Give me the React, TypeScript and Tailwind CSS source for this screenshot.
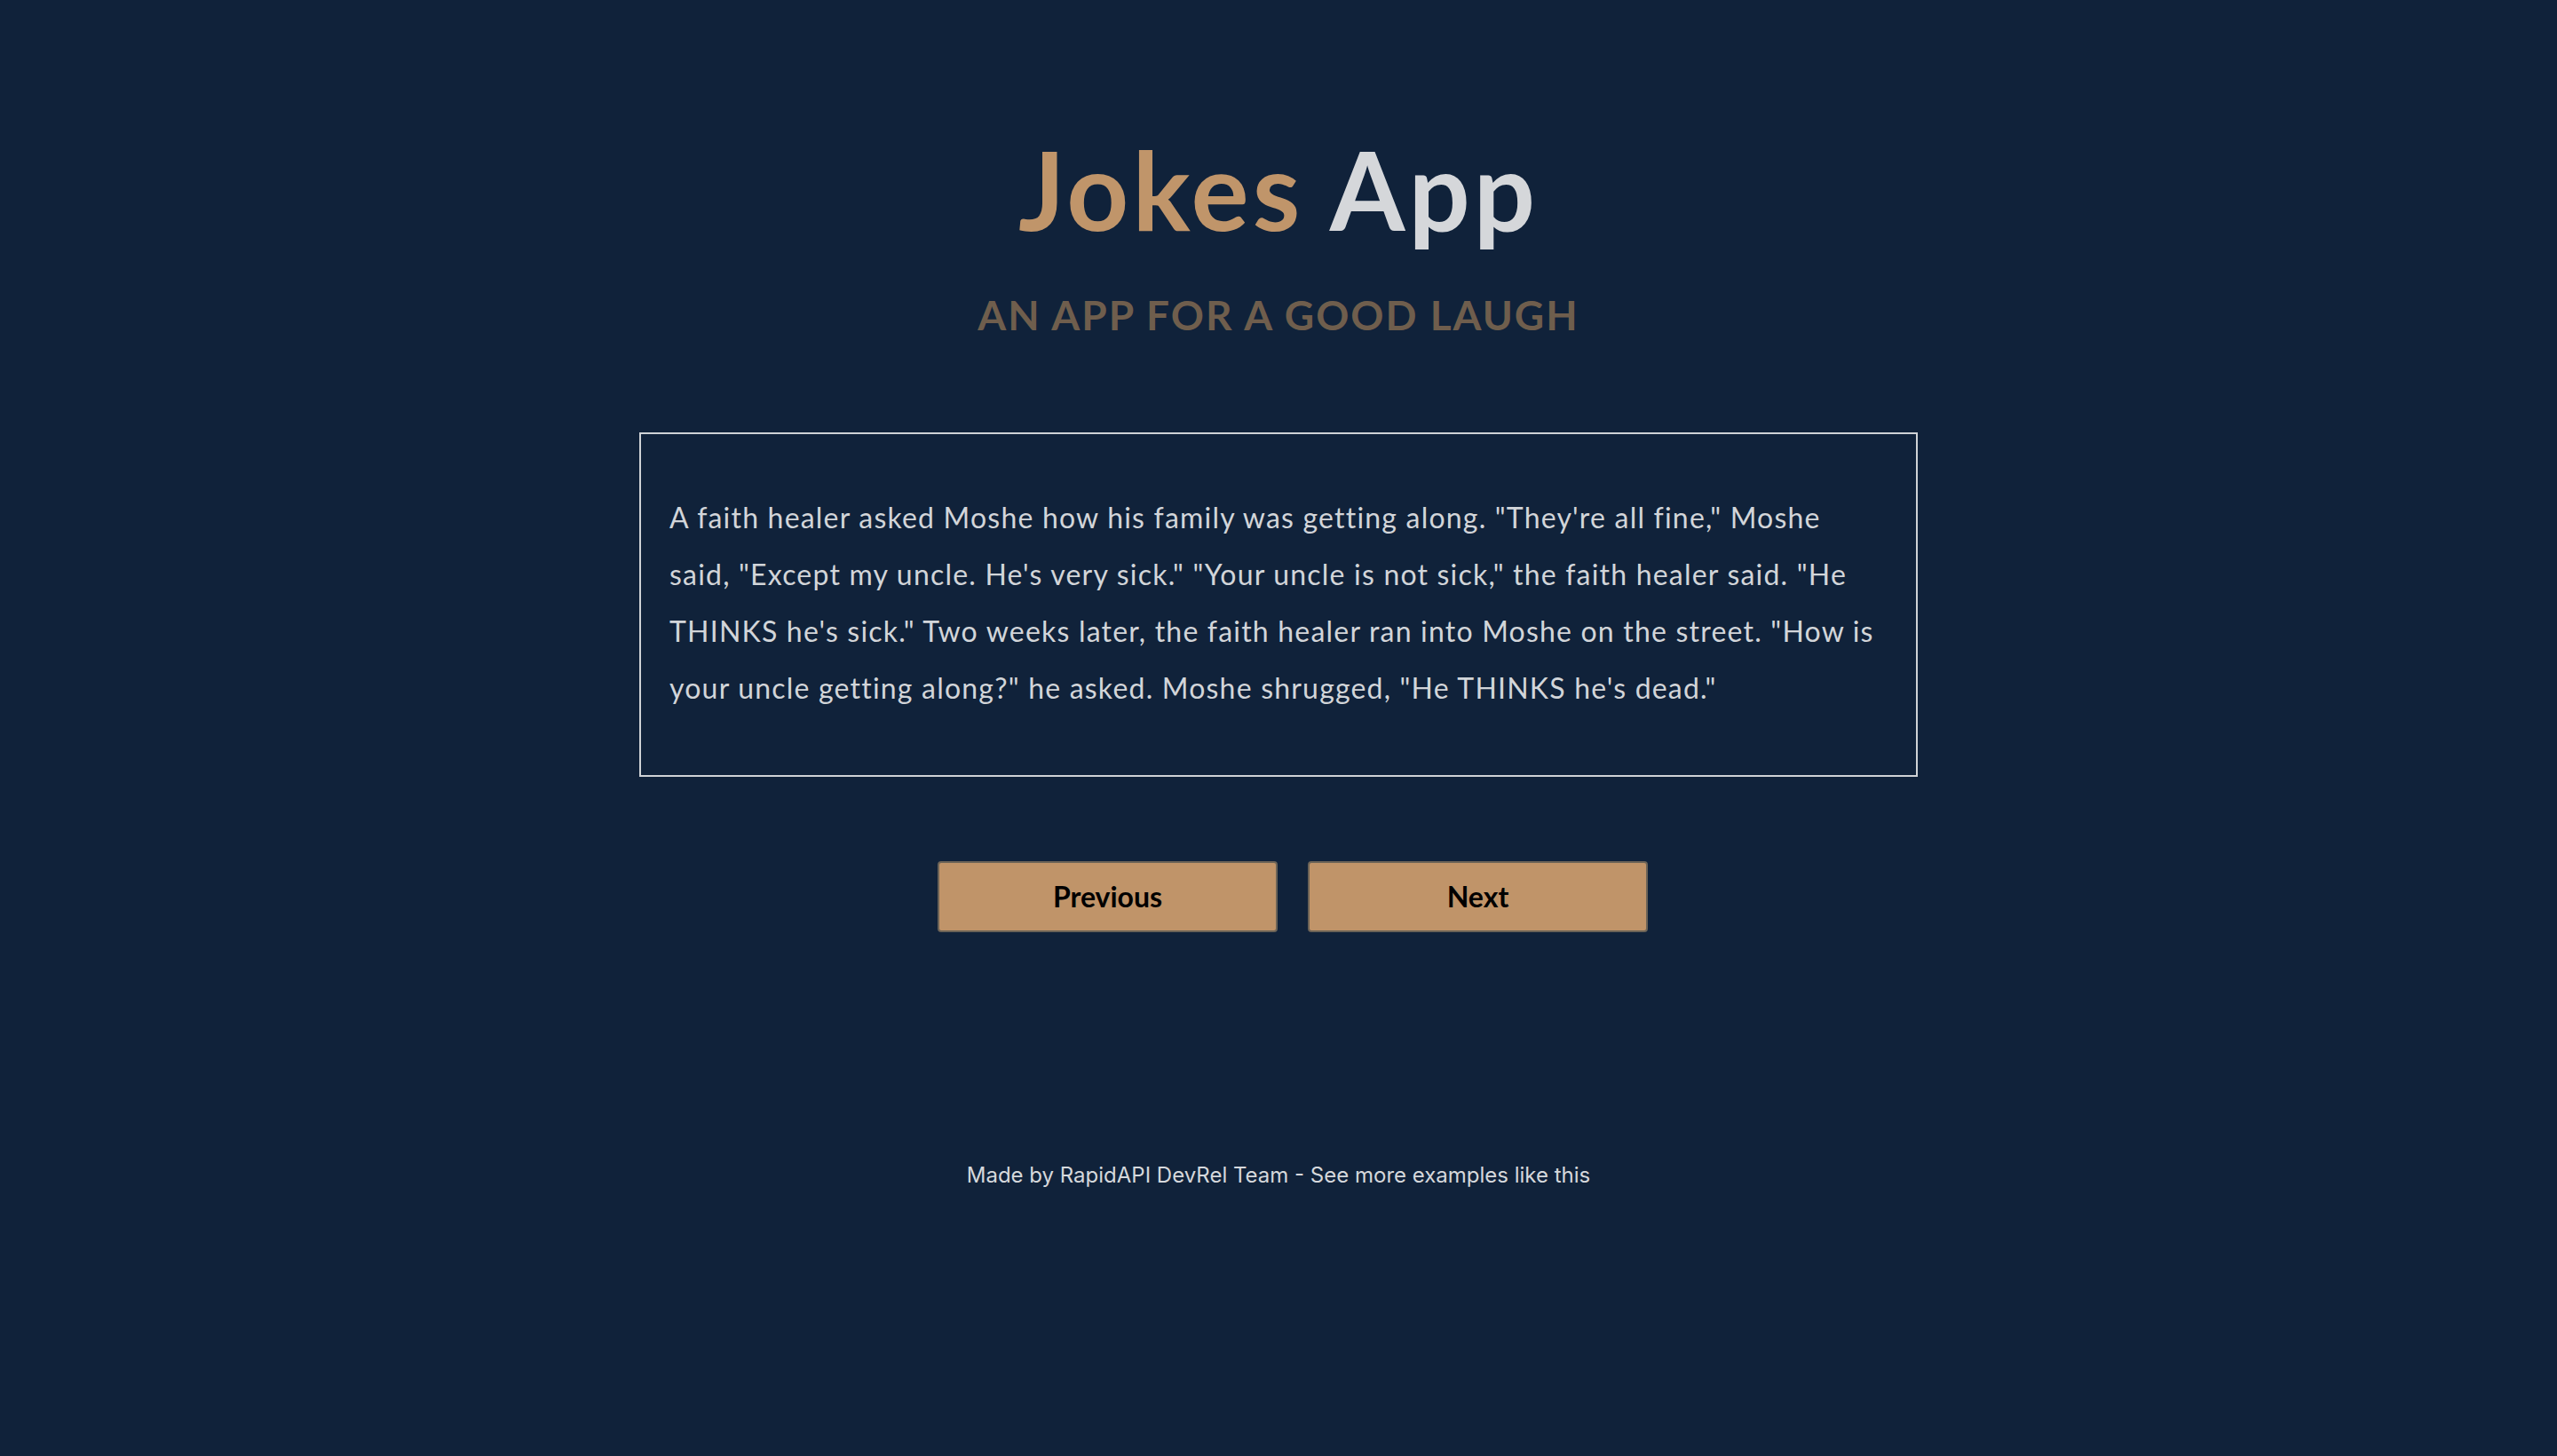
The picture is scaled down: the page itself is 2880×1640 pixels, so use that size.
export default function App() {
  return (
    <main className="min-h-screen bg-[#10223a] flex flex-col items-center font-['Lato',sans-serif]">
      {/* Header */}
      <h1 className="pt-[152px] text-[122px] leading-[122px] font-bold tracking-[4px]">
        <span className="text-[#c0956a]">Jokes</span>{' '}
        <span className="text-[#d5d7da]">App</span>
      </h1>
      <h2 className="mt-[58px] text-[46px] leading-[46px] font-bold uppercase tracking-[2px] text-[#6f5e4d]">
        An app for a good laugh
      </h2>

      {/* Joke card */}
      <div className="mt-[109px] w-[1440px] border-2 border-[#cfd2d6] px-[32px] pt-[62px] pb-[66px]">
        <p className="text-[32px] leading-[64px] tracking-[1.2px] whitespace-nowrap text-[#d2d5d9]">
          A faith healer asked Moshe how his family was getting along. "They're all fine," Moshe
          <br />
          said, "Except my uncle. He's very sick." "Your uncle is not sick," the faith healer said. "He
          <br />
          THINKS he's sick." Two weeks later, the faith healer ran into Moshe on the street. "How is
          <br />
          your uncle getting along?" he asked. Moshe shrugged, "He THINKS he's dead."
        </p>
      </div>

      {/* Controls */}
      <div className="mt-[95px] pl-[32px] flex gap-[34px]">
        <button className="w-[383px] h-[80px] bg-[#c09469] border-2 border-[#6b6357] rounded-[4px] text-[32px] font-bold text-black">
          Previous
        </button>
        <button className="w-[383px] h-[80px] bg-[#c09469] border-2 border-[#6b6357] rounded-[4px] text-[32px] font-bold text-black">
          Next
        </button>
      </div>

      <footer className="mt-[262px] text-[24px] leading-[24px] text-[#d5d8dc] font-['Inter',sans-serif]">
        Made by RapidAPI DevRel Team - See more examples like this
      </footer>
    </main>
  );
}
